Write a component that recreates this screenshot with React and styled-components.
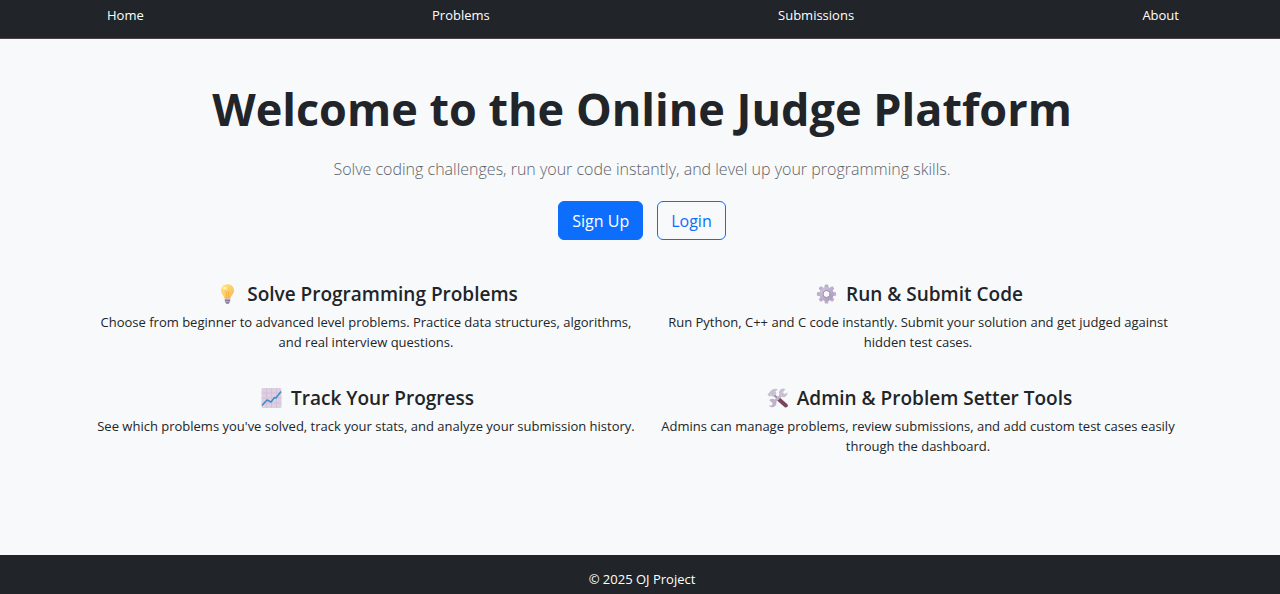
import React from "react";
import styled, { createGlobalStyle } from "styled-components";

const GlobalStyles = createGlobalStyle`
  *,
  *::before,
  *::after {
    box-sizing: border-box;
    margin: 0;
    padding: 0;
  }

  body {
    background-color: #f8f9fa;
    color: #212529;
    font-family: "Segoe UI", "Open Sans", "Noto Sans", sans-serif;
    font-size: 13px;
    line-height: 20px;
  }
`;

const Page = styled.div`
  display: flex;
  flex-direction: column;
  min-height: 100vh;
`;

const Header = styled.header`
  background-color: #212529;
  border-bottom: 1px solid #4a4245;
  padding: 5px 101px 13px 107px;
`;

const Nav = styled.nav`
  display: flex;
  justify-content: space-between;
`;

const NavLink = styled.a`
  color: #fff;
  text-decoration: none;
`;

const Main = styled.main`
  flex: 1;
  padding: 40px 92px 60px 96px;
  text-align: center;
`;

const Title = styled.h1`
  font-size: 45px;
  font-weight: 700;
  line-height: 60px;
  margin-bottom: 16px;
`;

const Lead = styled.p`
  color: #5c636a;
  font-size: 16px;
  font-weight: 300;
  line-height: 28px;
`;

const Actions = styled.div`
  display: flex;
  justify-content: center;
  gap: 14px;
  margin: 18px 0 41px;
`;

const Button = styled.button`
  height: 39px;
  padding: 0 13px;
  border: 1px solid #0d6efd;
  border-radius: 6px;
  background-color: ${(props) => (props.$outline ? "transparent" : "#0d6efd")};
  color: ${(props) => (props.$outline ? "#0d6efd" : "#fff")};
  font-family: inherit;
  font-size: 16px;
  cursor: pointer;
`;

const Features = styled.section`
  display: grid;
  grid-template-columns: 1fr 1fr;
  gap: 33px 12px;
`;

const FeatureTitle = styled.h2`
  display: flex;
  justify-content: center;
  align-items: center;
  gap: 6px;
  font-size: 19px;
  font-weight: 600;
  line-height: 26px;
  margin-bottom: 5px;
`;

const Icon = styled.svg`
  width: 27px;
  height: 20px;
`;

const Footer = styled.footer`
  background-color: #212529;
  color: #fff;
  padding: 14px 0 5px 4px;
  text-align: center;
`;

function BulbIcon() {
  return (
    <Icon viewBox="0 0 27 20" aria-hidden="true">
      <defs>
        <linearGradient id="bulb" x1="0" y1="0" x2="1" y2="1">
          <stop offset="0" stopColor="#ffe680" />
          <stop offset="1" stopColor="#f7b850" />
        </linearGradient>
      </defs>
      <path
        d="M13.5 0.2C9.600 0.2 7 3 7 6.500c0 3.200 2.800 4.800 3.500 8h6c.7-3.200 3.500-4.800 3.500-8 0-3.500-2.600-6.300-6.500-6.300z"
        fill="url(#bulb)"
      />
      <path
        d="M11 7.500l1.500 1 1-1 1 1 1.500-1M12.500 8.500v5.500M14.500 8.500v5.500"
        fill="none"
        stroke="#f0a040"
        strokeWidth="0.6"
      />
      <ellipse cx="10.800" cy="4" rx="2" ry="1.500" fill="#fff3a8" />
      <path d="M10.800 14.500h5.400v3q0 2-2.700 2t-2.700-2z" fill="#b3a4c2" />
      <path d="M10.800 16.500h5.400" stroke="#7c6a8d" strokeWidth="0.7" />
      <path d="M12 19h3" stroke="#6b5577" strokeWidth="1" />
    </Icon>
  );
}

function GearIcon() {
  const teeth = [0, 45, 90, 135, 180, 225, 270, 315];

  return (
    <Icon viewBox="0 0 27 20" aria-hidden="true">
      <defs>
        <linearGradient id="gear" x1="0" y1="0" x2="1" y2="1">
          <stop offset="0" stopColor="#cdc2da" />
          <stop offset="1" stopColor="#ad9cbf" />
        </linearGradient>
      </defs>
      {teeth.map((angle) => (
        <path
          key={angle}
          d="M11.300 4l.500-3q.1-.6.700-.6h2q.6 0 .7.600l.500 3z"
          fill="#bcaecb"
          transform={`rotate(${angle} 13.500 10)`}
        />
      ))}
      <circle
        cx="13.500"
        cy="10"
        r="5"
        fill="none"
        stroke="url(#gear)"
        strokeWidth="4"
      />
      <circle
        cx="13.500"
        cy="10"
        r="3.500"
        fill="none"
        stroke="#9d8bb0"
        strokeWidth="0.8"
      />
    </Icon>
  );
}

function ChartIcon() {
  return (
    <Icon viewBox="0 0 27 20" aria-hidden="true">
      <rect x="3.500" width="20" height="20" rx="1.500" fill="#dccfe2" />
      <path
        d="M8.500 0v20M13.500 0v20M18.500 0v20M3.500 5h20M3.500 10h20M3.500 15h20"
        stroke="#cdbad4"
        strokeWidth="0.6"
      />
      <path
        d="M4 17.500l5-5.500 4 2 3.500-4.500 1.500.5 5-6.500"
        fill="none"
        stroke="#3f8bc9"
        strokeWidth="1.500"
        strokeLinejoin="round"
      />
    </Icon>
  );
}

function ToolsIcon() {
  return (
    <Icon viewBox="0 0 27 20" aria-hidden="true">
      <path
        d="M15 11.500l6.800 6"
        stroke="#79465f"
        strokeWidth="4"
        strokeLinecap="round"
      />
      <path d="M9.500 6.500l5.500 5" stroke="#9d8bad" strokeWidth="2.200" />
      <path
        d="M3.500 6.500L7 2.500Q9.500 0 14 1.200L11.500 3.500l1 2-3.500 3.500-2-1.500-1.500 1.200z"
        fill="#c9c0d2"
      />
      <path d="M9 15L18.500 6" stroke="#bfb3ca" strokeWidth="2.600" />
      <path
        d="M21.500 1.200a4.300 4.300 0 1 0 2 3.300l-3 1.500-1.700-1.800z"
        fill="#c9c0d2"
      />
      <path
        d="M5.200 12.200a4.200 4.200 0 1 1-.4 5.200l3 .2.900-2.300z"
        fill="#bfb3ca"
      />
    </Icon>
  );
}

const navLinks = ["Home", "Problems", "Submissions", "About"];

const features = [
  {
    icon: <BulbIcon />,
    title: "Solve Programming Problems",
    text: "Choose from beginner to advanced level problems. Practice data structures, algorithms, and real interview questions.",
  },
  {
    icon: <GearIcon />,
    title: "Run & Submit Code",
    text: "Run Python, C++ and C code instantly. Submit your solution and get judged against hidden test cases.",
  },
  {
    icon: <ChartIcon />,
    title: "Track Your Progress",
    text: "See which problems you've solved, track your stats, and analyze your submission history.",
  },
  {
    icon: <ToolsIcon />,
    title: "Admin & Problem Setter Tools",
    text: "Admins can manage problems, review submissions, and add custom test cases easily through the dashboard.",
  },
];

function App() {
  return (
    <>
      <GlobalStyles />
      <Page>
        <Header>
          <Nav>
            {navLinks.map((link) => (
              <NavLink key={link} href={`#${link.toLowerCase()}`}>
                {link}
              </NavLink>
            ))}
          </Nav>
        </Header>

        <Main>
          <Title>Welcome to the Online Judge Platform</Title>
          <Lead>
            Solve coding challenges, run your code instantly, and level up your
            programming skills.
          </Lead>
          <Actions>
            <Button>Sign Up</Button>
            <Button $outline>Login</Button>
          </Actions>

          <Features>
            {features.map((feature) => (
              <article key={feature.title}>
                <FeatureTitle>
                  {feature.icon}
                  {feature.title}
                </FeatureTitle>
                <p>{feature.text}</p>
              </article>
            ))}
          </Features>
        </Main>

        <Footer>© 2025 OJ Project</Footer>
      </Page>
    </>
  );
}

export default App;
